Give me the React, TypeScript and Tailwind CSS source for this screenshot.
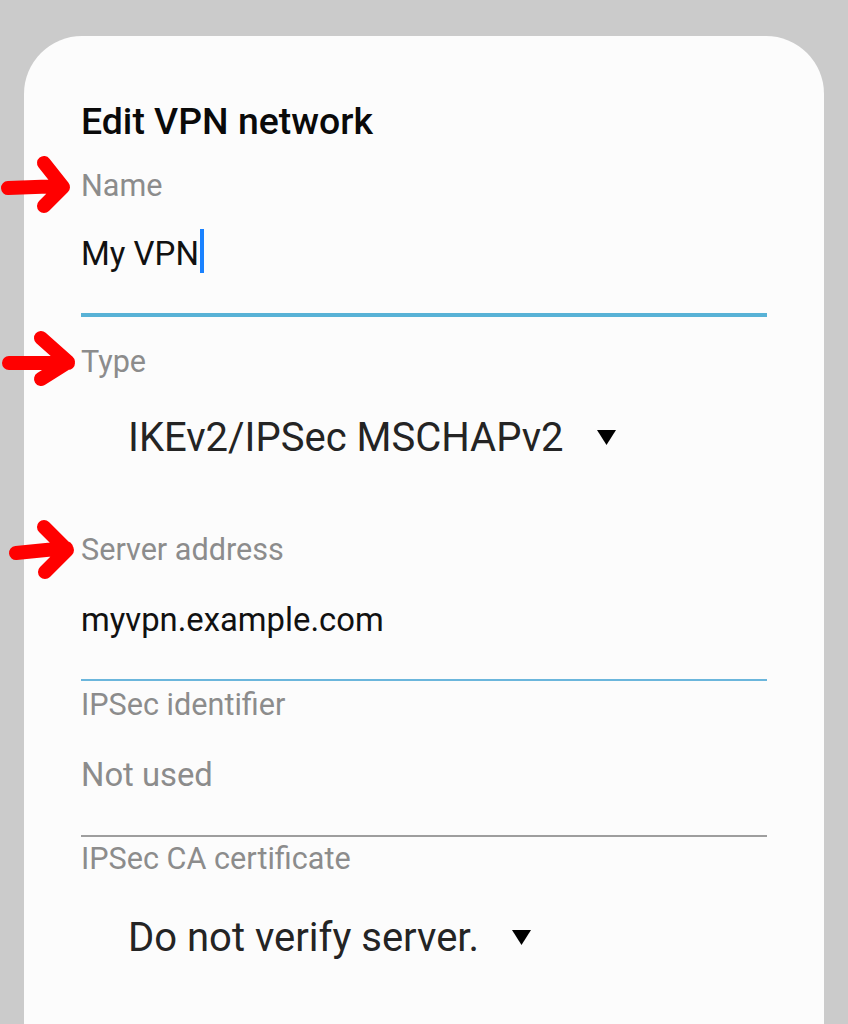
const font = { fontFamily: "Roboto, 'Noto Sans', sans-serif" };

function Label({ text, className }: { text: string; className: string }) {
  return (
    <div className={`text-[30.6px] leading-[30px] text-[#8c8c8c] ${className}`}>{text}</div>
  );
}

function Dropdown({ value, className }: { value: string; className: string }) {
  return (
    <div className={`flex items-center pl-[47px] text-[40px] leading-[39px] text-[#242424] ${className}`}>
      <span>{value}</span>
      <svg viewBox="0 0 19 15" className="ml-[33px] h-[15px] w-[19px]">
        <path d="M0 0 L19 0 L9.5 15 Z" fill="#000" />
      </svg>
    </div>
  );
}

function Arrows() {
  // red hand-drawn markers pointing at the fields
  const marks = [
    "M8 188 L62 186 M44 163 L63 187 L44 206",
    "M9 363 L68 363 M41 338 L68 362 L41 379",
    "M16 553 L66 548 M44 527 L67 550 L45 572",
  ];
  return (
    <svg className="pointer-events-none absolute left-0 top-0 h-[1024px] w-[100px]" viewBox="0 0 100 1024">
      {marks.map((d) => (
        <path key={d} d={d} fill="none" stroke="#ff0000" strokeWidth={14} strokeLinecap="round" strokeLinejoin="round" />
      ))}
    </svg>
  );
}

export default function App() {
  return (
    <div className="relative h-[1024px] overflow-hidden bg-[#cbcbcb] pt-[36px]" style={font}>
      <div className="mx-[24px] h-[1100px] rounded-t-[58px] bg-[#fcfcfc] px-[57px] pt-[68px]">
        <div className="text-[37.4px] font-medium leading-[34px] text-[#0a0a0a]">Edit VPN network</div>

        <Label text="Name" className="mt-[33px]" />
        <div className="mt-[37px] text-[33px] leading-[32px] text-[#111]">
          <span className="relative">
            My VPN
            <span className="absolute left-full top-[-5px] ml-[1px] h-[44px] w-[4px] bg-[#1a82ff]" />
          </span>
        </div>
        <div className="mt-[43px] h-[4px] bg-[#58b2d6]" />

        <Label text="Type" className="mt-[30px]" />
        <Dropdown value="IKEv2/IPSec MSCHAPv2" className="mt-[41px]" />

        <Label text="Server address" className="mt-[78px]" />
        <div className="mt-[39px] text-[32.8px] leading-[33px] text-[#111]">myvpn.example.com</div>
        <div className="mt-[42px] h-[2px] bg-[#6bb6dc]" />

        <Label text="IPSec identifier" className="mt-[9px]" />
        <div className="mt-[39px] text-[32.8px] leading-[33px] text-[#8c8c8c]">Not used</div>
        <div className="mt-[43px] h-[2px] bg-[#9e9e9e]" />

        <Label text="IPSec CA certificate" className="mt-[7px]" />
        <Dropdown value="Do not verify server." className="mt-[44px]" />
      </div>
      <Arrows />
    </div>
  );
}
